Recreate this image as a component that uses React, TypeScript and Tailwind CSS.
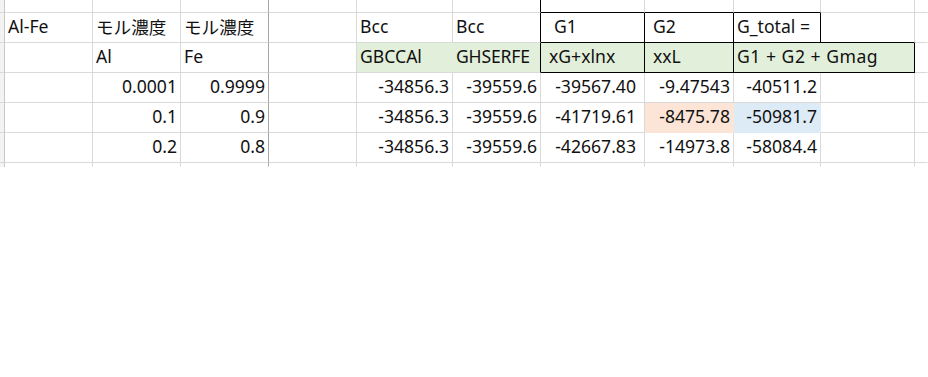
import React from "react";

type CellProps = {
  t?: string;
  right?: boolean;
  cls?: string;
  r?: string;
  b?: string;
};

const GRID_R = "border-r-[#d9d9d9]";
const GRID_B = "border-b-[#d9d9d9]";

function Cell({ t, right, cls = "", r = GRID_R, b = GRID_B }: CellProps) {
  return (
    <div
      className={`flex items-center whitespace-nowrap pb-[2px] border-r border-b ${r} ${b} ${
        right ? "justify-end pr-[3px]" : "pl-[3px]"
      } ${cls}`}
    >
      {t}
    </div>
  );
}

// left strip (row header edge)
function Edge({ last }: { last?: boolean }) {
  return (
    <div
      className={`bg-[#f3f3f3] border-r border-r-[#c8c8c8] ${
        last ? "" : "border-b border-b-[#d9d9d9]"
      }`}
    />
  );
}

const DIV = "border-r-[#a6a6a6]";

export default function App() {
  return (
    <div className="w-[928px] h-[377px] bg-white overflow-hidden font-['Noto_Sans','Noto_Sans_CJK_JP',sans-serif] text-[17.6px] text-[#111] leading-[27px]">
      <div className="grid grid-cols-[5px_88px_88px_88px_88px_96px_88px_104px_89px_87px_94px_13px] grid-rows-[13px_30px_30px_30px_30px_30px_4px]">
        {/* row 0 (partial) */}
        <Edge />
        <Cell />
        <Cell />
        <Cell r={DIV} />
        <Cell />
        <Cell />
        <Cell r="border-r-black" />
        <Cell b="border-b-black" />
        <Cell b="border-b-black" />
        <Cell b="border-b-black" />
        <Cell />
        <Cell r="border-r-transparent" />

        {/* row 1 */}
        <Edge />
        <Cell t="Al-Fe" />
        <Cell t="モル濃度" cls="font-['Noto_Sans_CJK_JP',sans-serif]" />
        <Cell t="モル濃度" cls="font-['Noto_Sans_CJK_JP',sans-serif]" r={DIV} />
        <Cell />
        <Cell t="Bcc" />
        <Cell t="Bcc" r="border-r-black" />
        <Cell t="G1" cls="pl-[13px]" r="border-r-black" b="border-b-black" />
        <Cell t="G2" cls="pl-[8px]" r="border-r-black" b="border-b-black" />
        <Cell t="G_total =" r="border-r-black" b="border-b-black" />
        <Cell b="border-b-black" />
        <Cell r="border-r-transparent" />

        {/* row 2 */}
        <Edge />
        <Cell />
        <Cell t="Al" />
        <Cell t="Fe" r={DIV} />
        <Cell />
        <Cell t="GBCCAl" cls="bg-[#e2efda]" r="border-r-[#e2efda]" />
        <Cell t="GHSERFE" cls="bg-[#e2efda] tracking-[-0.2px]" r="border-r-black" />
        <Cell
          t="xG+xlnx"
          cls="bg-[#e2efda] pl-[8px]"
          r="border-r-black"
          b="border-b-black"
        />
        <Cell
          t="xxL"
          cls="bg-[#e2efda] pl-[8px]"
          r="border-r-black"
          b="border-b-black"
        />
        <Cell
          t="G1 + G2 + Gmag"
          cls="bg-[#e2efda] col-span-2 tracking-[0.5px]"
          r="border-r-black"
          b="border-b-black"
        />
        <Cell r="border-r-transparent" />

        {/* row 3 */}
        <Edge />
        <Cell />
        <Cell t="0.0001" right />
        <Cell t="0.9999" right r={DIV} />
        <Cell />
        <Cell t="-34856.3" right />
        <Cell t="-39559.6" right />
        <Cell t="-39567.40" right cls="pr-[8px]" />
        <Cell t="-9.47543" right />
        <Cell t="-40511.2" right />
        <Cell />
        <Cell r="border-r-transparent" />

        {/* row 4 */}
        <Edge />
        <Cell />
        <Cell t="0.1" right />
        <Cell t="0.9" right r={DIV} />
        <Cell />
        <Cell t="-34856.3" right />
        <Cell t="-39559.6" right />
        <Cell t="-41719.61" right cls="pr-[8px]" />
        <Cell
          t="-8475.78"
          right
          cls="bg-[#fce4d6]"
          r="border-r-[#fce4d6]"
          b="border-b-[#fce4d6]"
        />
        <Cell
          t="-50981.7"
          right
          cls="bg-[#ddebf7]"
          r="border-r-[#ddebf7]"
          b="border-b-[#ddebf7]"
        />
        <Cell />
        <Cell r="border-r-transparent" />

        {/* row 5 */}
        <Edge />
        <Cell />
        <Cell t="0.2" right />
        <Cell t="0.8" right r={DIV} />
        <Cell />
        <Cell t="-34856.3" right />
        <Cell t="-39559.6" right />
        <Cell t="-42667.83" right cls="pr-[8px]" />
        <Cell t="-14973.8" right />
        <Cell t="-58084.4" right />
        <Cell />
        <Cell r="border-r-transparent" />

        {/* row 6 (partial) */}
        <Edge last />
        <Cell b="border-b-transparent" />
        <Cell b="border-b-transparent" />
        <Cell r={DIV} b="border-b-transparent" />
        <Cell b="border-b-transparent" />
        <Cell b="border-b-transparent" />
        <Cell b="border-b-transparent" />
        <Cell b="border-b-transparent" />
        <Cell b="border-b-transparent" />
        <Cell b="border-b-transparent" />
        <Cell b="border-b-transparent" />
        <Cell r="border-r-transparent" b="border-b-transparent" />
      </div>
    </div>
  );
}
